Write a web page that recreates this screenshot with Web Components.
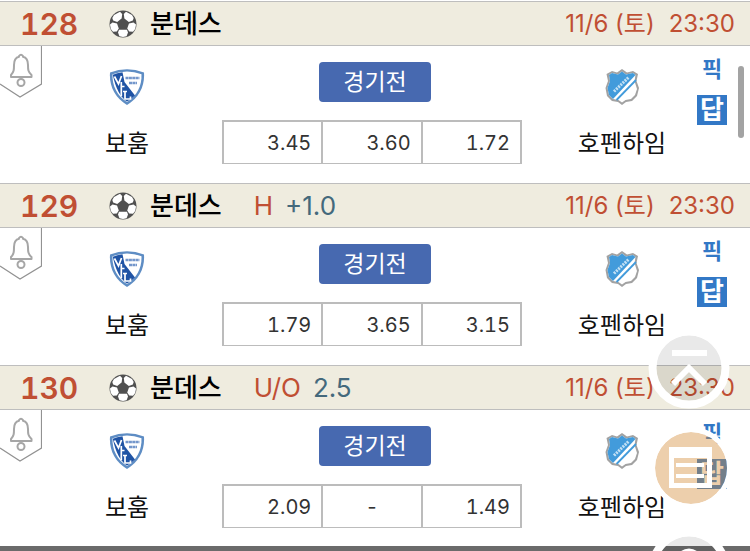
<!DOCTYPE html>
<html lang="ko">
<head>
<meta charset="utf-8">
<meta name="viewport" content="width=device-width, initial-scale=1">
<title>분데스 경기 목록</title>
<style>
body { margin: 0; background: #fff; font-family: Inter, "Noto Sans CJK KR", sans-serif; color: #111; }
</style>
</head>
<body>
<match-list>
  <match-card number="128" odds="3.45,3.60,1.72"></match-card>
  <match-card number="129" kind="H" line="+1.0" odds="1.79,3.65,3.15"></match-card>
  <match-card number="130" kind="U/O" line="2.5" odds="2.09,-,1.49"></match-card>
</match-list>
<script>
class SoccerBall extends HTMLElement {
  constructor() {
    super();
    this.attachShadow({ mode: 'open' }).innerHTML = `
<style>:host{display:block;width:28px;height:28px}svg{display:block}</style>
<svg width="28" height="28" viewBox="0 0 28 28" aria-hidden="true">
<circle cx="14" cy="14" r="13.5" fill="#505050"/>
<g fill="#fff">
<path d="M5 5 11 1.800 13.200 4 12.600 8.600 8.200 12 4.200 10.500 3.300 8z"/>
<path d="M23 5 17 1.800 14.800 4 15.400 8.600 19.800 12 23.800 10.500 24.700 8z"/>
<path d="M1 14.500 3.500 12.400 8 13.600 9.800 18.500 7.800 21.600 4 21.800 1.800 19z"/>
<path d="M27 14.500 24.500 12.400 20 13.600 18.200 18.500 20.200 21.600 24 21.800 26.200 19z"/>
<path d="M10 19.800H18L19 22.500 17.600 26.300 14 27 10.400 26.300 9 22.500z"/>
</g></svg>`;
  }
}
class TeamCrest extends HTMLElement {
  connectedCallback() {
    const crests = {
      bochum: `<path d="M1 4.500Q18 -2 35 4.500C36 18 30 29.500 18 37 6 29.500 0 18 1 4.500z" fill="#5e8dc4"/>
<path d="M3.500 6.200Q18 .800 32.500 6.200C33 17.500 28 27.800 18 34 8 27.800 3 17.500 3.500 6.200z" fill="#fff"/>
<path d="M3.800 6.700Q8 4.800 13.500 4.200L15.500 14 26 27.500Q22 31.500 18 33.500 8 27 3.800 6.700z" fill="#2054a5"/>
<path d="M5.500 8.500 9.500 16 12.500 8M12.300 14V28M12.300 18.500H15.500M14 23.500H18M16 23.500V31H21.500V28.500" fill="none" stroke="#fff" stroke-width="1.700"/>
<path d="M16.500 10H30.500M20 15H28" stroke="#7396cb" stroke-width="2.600" stroke-dasharray="3 .4"/>`,
      hoffenheim: `<path d="M8 3 13 4.500 18 1 23 4.500 29 3 34 6 32.500 13 35 20 33 28 28 33 22 34 18 37 14 34 8 33 3 28 1.500 20 4 13 2.500 6z" fill="#a2a2a2"/>
<path d="M8 5 14 6.500 18 3.500 22 6.500 29 5 31.500 7 30.500 13 33 21 31 27 27 31 21.500 32 18 34.500 14.500 32 9 31 5 27 3.500 20 6 13 5 7z" fill="#fff"/>
<path d="M8 5 14 6.500 18 3.500 22 6.500 29 5 31.500 7 9 31 5 27 3.500 20 6 13 5 7z" fill="#429bdb"/>
<path d="M12.500 32 32 12" stroke="#429bdb" stroke-width="1.800"/>
<path d="M10 23.500 24.500 9.500" stroke="#c3e1f5" stroke-width="3" stroke-dasharray="2 1"/>`
    };
    this.attachShadow({ mode: 'open' }).innerHTML = `
<style>
:host{display:flex;flex-direction:column;align-items:center;padding-top:22px}
svg{display:block;height:38px}
span{margin-top:20px;font-size:24px;line-height:36px;white-space:nowrap}
</style>
<svg width="36" height="38" viewBox="0 0 36 38" aria-hidden="true">${crests[this.getAttribute('club')]}</svg>
<span><slot></slot></span>`;
  }
}
class AlarmTab extends HTMLElement {
  constructor() {
    super();
    this.attachShadow({ mode: 'open' }).innerHTML = `
<style>:host{display:block}button{display:block;border:0;padding:0;background:none;cursor:pointer}svg{display:block}</style>
<button type="button" aria-label="알림"><svg width="42" height="53" viewBox="0 0 42 53" fill="none">
<path d="M41.500 0V38L20 51 0 38" stroke="#929292" stroke-width="1.200"/>
<path d="M11 31V29C14 26 14 23.500 14 19C14 14 16 11.500 19 10.800V10Q21 7.500 23 10V10.800C26 11.500 28 14 28 19C28 23.500 28 26 31.500 29V31z" stroke="#a6a6a6" stroke-width="2" stroke-linejoin="round"/>
<circle cx="21" cy="36.500" r="3.500" stroke="#a6a6a6" stroke-width="2"/></svg></button>`;
  }
}
class OddsRow extends HTMLElement {
  connectedCallback() {
    const cells = this.getAttribute('values').split(',').map(v =>
      `<button type="button"${v === '-' ? ' class="none"' : ''}>${v}</button>`).join('');
    this.attachShadow({ mode: 'open' }).innerHTML = `
<style>
:host{display:grid;grid-template-columns:repeat(3,1fr);border:solid #bcbcbc;border-width:2px 0 1px 2px;box-sizing:border-box;width:300px}
button{height:41px;border:0;border-right:2px solid #bcbcbc;background:#fff;padding:0 10px 0 0;text-align:right;font:inherit;font-size:20px;line-height:24px;font-variant-numeric:tabular-nums;color:#333;cursor:pointer}
.none{text-align:center;padding:0}
</style>${cells}`;
  }
}
class MatchCard extends HTMLElement {
  connectedCallback() {
    const a = n => this.getAttribute(n) || '';
    this.attachShadow({ mode: 'open' }).innerHTML = `
<style>
:host{display:block}
header{display:flex;align-items:center;box-sizing:border-box;height:45px;padding:0 15px 0 20px;background:#efecdf;border:solid #bebebe;border-width:1px 0}
.no{width:89px;font-size:30px;line-height:36px;font-weight:600;font-variant-numeric:tabular-nums;color:#c04f33}
.league{margin-left:13px;font-size:26px;line-height:36px;font-weight:500;color:#000}
.kind{margin-left:32px;font-size:26px;line-height:36px;color:#c04f33}
.line{margin-left:12px;font-size:26px;line-height:36px;color:#44697c}
time{display:flex;gap:14px;margin-left:auto;font-size:24px;line-height:36px;color:#c04f33;white-space:nowrap}
.body{display:grid;grid-template-columns:42px 45fr 306px 41fr 35px;padding-right:23px;height:137px}
.home{padding-right:10px}
.away{padding-left:24px}
.mid{display:flex;flex-direction:column;align-items:center;padding-top:16px;gap:18px}
.mid odds-row{align-self:flex-start}
.state{width:112px;height:40px;border:0;border-radius:4px;padding:0;background:#4769b0;color:#fff;font:inherit;font-size:23px;line-height:34px}
nav{display:flex;flex-direction:column;align-items:flex-end;padding-top:8px;gap:11px}
a{display:block;text-decoration:none;font-weight:700;text-align:center;line-height:30px;width:30px;color:#3278c6;font-size:22px}
a.ans{background:#3278c6;color:#fff;font-size:26px}
</style>
<header>
<span class="no">${a('number')}</span><soccer-ball></soccer-ball><span class="league">분데스</span>
${a('kind') ? `<span class="kind">${a('kind')}</span><span class="line">${a('line')}</span>` : ''}
<time><span>11/6 (토)</span><span>23:30</span></time>
</header>
<div class="body">
<alarm-tab></alarm-tab>
<team-crest class="home" club="bochum">보훔</team-crest>
<div class="mid"><button class="state" type="button">경기전</button><odds-row values="${a('odds')}"></odds-row></div>
<team-crest class="away" club="hoffenheim">호펜하임</team-crest>
<nav><a href="#pick">픽</a><a class="ans" href="#answer">답</a></nav>
</div>`;
  }
}
class FloatingActions extends HTMLElement {
  constructor() {
    super();
    this.attachShadow({ mode: 'open' }).innerHTML = `
<style>
:host{position:absolute;right:20px;top:327px;display:flex;flex-direction:column;gap:20px}
button{display:block;border:0;padding:0;background:none;cursor:pointer}
svg{display:block}
</style>
<button type="button" aria-label="맨 위로"><svg width="82" height="82" viewBox="0 0 82 82" fill="none">
<circle cx="41" cy="41" r="33" fill="#000" fill-opacity=".085"/><circle cx="41" cy="41" r="36.500" stroke="#fff" stroke-width="8"/>
<path d="M24 26H59M25 57 41 41 57 57" stroke="#fff" stroke-width="6"/></svg></button>
<button type="button" aria-label="목록"><svg width="82" height="80" viewBox="0 0 82 80" fill="none">
<circle cx="43" cy="39" r="36" fill="#d48b36" fill-opacity=".41"/><circle cx="43" cy="39" r="38.500" stroke="#fff" stroke-width="5"/>
<path fill="#fff" fill-rule="evenodd" d="M21 18H64V59H21zM26 29V54H59V29z"/><path d="M28 36H56M28 47H56" stroke="#fff" stroke-width="4"/></svg></button>
<button type="button" aria-label="새로고침"><svg width="82" height="22" viewBox="0 0 82 22" fill="none">
<circle cx="41" cy="40" r="33" fill="#000" fill-opacity=".085"/><circle cx="41" cy="40" r="36.500" stroke="#fff" stroke-width="8"/>
<circle cx="41" cy="33" r="11" stroke="#fff" stroke-width="5"/></svg></button>`;
  }
}
class MatchList extends HTMLElement {
  constructor() {
    super();
    this.attachShadow({ mode: 'open' }).innerHTML = `
<style>
:host{display:block;position:relative;padding-top:1px;overflow:hidden}
.edge{height:5px;margin-top:-1px;background:#6b6b6b}
.thumb{position:absolute;right:6px;top:66px;width:6px;height:72px;border-radius:3px;background:#a3a3a3}
</style>
<slot></slot><div class="edge"></div><div class="thumb"></div><floating-actions></floating-actions>`;
  }
}
customElements.define('soccer-ball', SoccerBall);
customElements.define('team-crest', TeamCrest);
customElements.define('alarm-tab', AlarmTab);
customElements.define('odds-row', OddsRow);
customElements.define('match-card', MatchCard);
customElements.define('floating-actions', FloatingActions);
customElements.define('match-list', MatchList);
</script>
</body>
</html>
